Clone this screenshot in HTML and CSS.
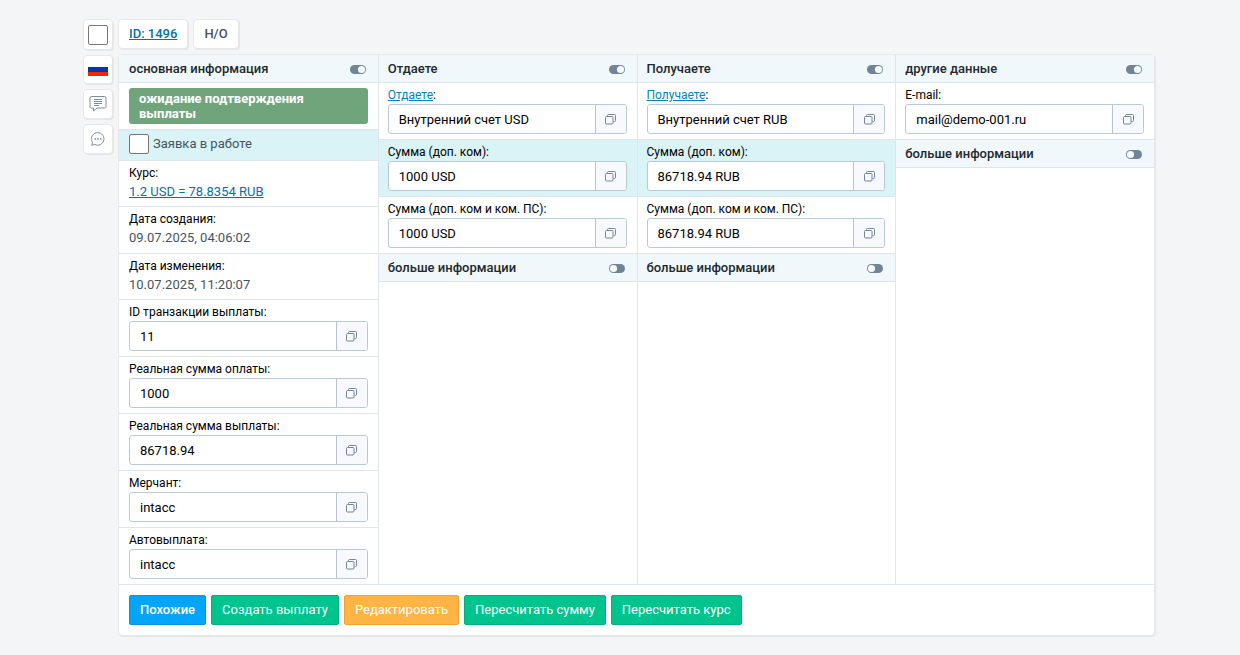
FILE: index.html
```html
<!DOCTYPE html>
<html lang="ru">
<head>
<meta charset="utf-8">
<title>Заявка 1496</title>
<link rel="stylesheet" href="styles.css">
</head>
<body>
<svg class="sprite" aria-hidden="true">
  <symbol id="copy" viewBox="0 0 11 11"><path d="M2.5 2.500V1.500a1 1 0 0 1 1-1h6a1 1 0 0 1 1 1v5a1 1 0 0 1-1 1h-1M1.500 2.500h5.500a1 1 0 0 1 1 1v5.500a1 1 0 0 1-1 1h-5.500a1 1 0 0 1-1-1v-5.500a1 1 0 0 1 1-1z" fill="none" stroke="#728599"/></symbol>
  <symbol id="on" viewBox="0 0 16 9"><rect width="16" height="9" rx="4.500" fill="#718496"/><circle cx="11.500" cy="4.500" r="3.600" fill="#f5fafc"/></symbol>
  <symbol id="off" viewBox="0 0 16 9"><rect width="16" height="9" rx="4.500" fill="#718496"/><circle cx="4.500" cy="4.500" r="3.600" fill="#f5fafc"/></symbol>
</svg>
<main class="order">
  <aside class="side">
    <label class="tile select"><input type="checkbox" class="check" aria-label="Выбрать заявку"></label>
    <button class="tile lang" aria-label="Язык: русский"><span class="flag"></span></button>
    <button class="tile" aria-label="Комментарий"><svg width="18" height="16" viewBox="0 0 18 16" fill="none" stroke="#7a8da0"><path d="M2.500.5h13a1.500 1.500 0 0 1 1.500 1.500v8.500a1.500 1.500 0 0 1-1.500 1.500H8l-3.500 3v-3h-2A1.500 1.500 0 0 1 1 10.500V2A1.500 1.500 0 0 1 2.500.5zM5 3.500h8M5 5.500h8M5 7.500h8M5 9.500h5"/></svg></button>
    <button class="tile" aria-label="Сообщения"><svg width="14" height="14" viewBox="0 0 14 14" fill="none" stroke="#7a8da0"><path d="M1.500 10.500A6.300 6.300 0 1 1 3.800 12.500L.8 13.300z"/><path d="M3.500 7h1.500M6.200 7h1.500M9 7h1.500" stroke-width="1.500"/></svg></button>
  </aside>
  <section class="content">
    <header class="tabs"><div class="tab"><a href="#">ID: 1496</a></div><div class="tab">Н/О</div></header>
    <div class="panel">
      <div class="columns">
        <section class="column">
          <h2 class="head">основная информация<button class="toggle" aria-label="Свернуть"><svg width="16" height="9"><use href="#on"/></svg></button></h2>
          <div class="row state"><div class="status">ожидание подтверждения выплаты</div></div>
          <label class="row accent work"><input type="checkbox" class="check">Заявка в работе</label>
          <div class="row"><div class="label">Курс:</div><div class="value"><a href="#">1.2 USD = 78.8354 RUB</a></div></div>
          <div class="row"><div class="label">Дата создания:</div><div class="value created">09.07.2025, 04:06:02</div></div>
          <div class="row"><div class="label">Дата изменения:</div><div class="value">10.07.2025, 11:20:07</div></div>
          <div class="row"><label class="label" for="tx">ID транзакции выплаты:</label><div class="field"><input id="tx" value="11"><button class="copy" aria-label="Копировать"><svg width="11" height="11"><use href="#copy"/></svg></button></div></div>
          <div class="row"><label class="label" for="paid">Реальная сумма оплаты:</label><div class="field"><input id="paid" value="1000"><button class="copy" aria-label="Копировать"><svg width="11" height="11"><use href="#copy"/></svg></button></div></div>
          <div class="row"><label class="label" for="payout">Реальная сумма выплаты:</label><div class="field"><input id="payout" value="86718.94"><button class="copy" aria-label="Копировать"><svg width="11" height="11"><use href="#copy"/></svg></button></div></div>
          <div class="row"><label class="label" for="merchant">Мерчант:</label><div class="field"><input id="merchant" value="intacc"><button class="copy" aria-label="Копировать"><svg width="11" height="11"><use href="#copy"/></svg></button></div></div>
          <div class="row"><label class="label" for="auto">Автовыплата:</label><div class="field"><input id="auto" value="intacc"><button class="copy" aria-label="Копировать"><svg width="11" height="11"><use href="#copy"/></svg></button></div></div>
        </section>
        <section class="column">
          <h2 class="head">Отдаете<button class="toggle" aria-label="Свернуть"><svg width="16" height="9"><use href="#on"/></svg></button></h2>
          <div class="row"><div class="label"><a href="#">Отдаете</a>:</div><div class="field"><input aria-label="Отдаете" value="Внутренний счет USD"><button class="copy" aria-label="Копировать"><svg width="11" height="11"><use href="#copy"/></svg></button></div></div>
          <div class="row accent"><label class="label" for="give1">Сумма (доп. ком):</label><div class="field"><input id="give1" value="1000 USD"><button class="copy" aria-label="Копировать"><svg width="11" height="11"><use href="#copy"/></svg></button></div></div>
          <div class="row"><label class="label" for="give2">Сумма (доп. ком и ком. ПС):</label><div class="field"><input id="give2" value="1000 USD"><button class="copy" aria-label="Копировать"><svg width="11" height="11"><use href="#copy"/></svg></button></div></div>
          <h2 class="head">больше информации<button class="toggle" aria-label="Развернуть"><svg width="16" height="9"><use href="#off"/></svg></button></h2>
        </section>
        <section class="column">
          <h2 class="head">Получаете<button class="toggle" aria-label="Свернуть"><svg width="16" height="9"><use href="#on"/></svg></button></h2>
          <div class="row"><div class="label"><a href="#">Получаете</a>:</div><div class="field"><input aria-label="Получаете" value="Внутренний счет RUB"><button class="copy" aria-label="Копировать"><svg width="11" height="11"><use href="#copy"/></svg></button></div></div>
          <div class="row accent"><label class="label" for="get1">Сумма (доп. ком):</label><div class="field"><input id="get1" value="86718.94 RUB"><button class="copy" aria-label="Копировать"><svg width="11" height="11"><use href="#copy"/></svg></button></div></div>
          <div class="row"><label class="label" for="get2">Сумма (доп. ком и ком. ПС):</label><div class="field"><input id="get2" value="86718.94 RUB"><button class="copy" aria-label="Копировать"><svg width="11" height="11"><use href="#copy"/></svg></button></div></div>
          <h2 class="head">больше информации<button class="toggle" aria-label="Развернуть"><svg width="16" height="9"><use href="#off"/></svg></button></h2>
        </section>
        <section class="column">
          <h2 class="head">другие данные<button class="toggle" aria-label="Свернуть"><svg width="16" height="9"><use href="#on"/></svg></button></h2>
          <div class="row"><label class="label" for="mail">E-mail:</label><div class="field"><input id="mail" value="mail@demo-001.ru"><button class="copy" aria-label="Копировать"><svg width="11" height="11"><use href="#copy"/></svg></button></div></div>
          <h2 class="head">больше информации<button class="toggle" aria-label="Развернуть"><svg width="16" height="9"><use href="#off"/></svg></button></h2>
        </section>
      </div>
      <footer class="actions">
        <button class="btn blue">Похожие</button>
        <button class="btn green">Создать выплату</button>
        <button class="btn orange">Редактировать</button>
        <button class="btn green">Пересчитать сумму</button>
        <button class="btn green">Пересчитать курс</button>
      </footer>
    </div>
  </section>
</main>
</body>
</html>
```
FILE: styles.css
```css
* { box-sizing: border-box; }
body {
  margin: 0;
  background: #f4f5f7;
  color: #46535f;
  font: 400 13px/19px Roboto, sans-serif;
}
button, input { font: inherit; margin: 0; }
button { cursor: pointer; }
svg { display: block; }
a { color: #0073aa; }
.sprite { position: absolute; width: 0; height: 0; }

.order {
  display: grid;
  grid-template-columns: 30px minmax(0, 1fr);
  gap: 5px;
  padding: 19px 85px 19px 83px;
}
.side { display: flex; flex-direction: column; gap: 5px; }
.tile, .tab, .panel {
  background: #fff;
  border: 1px solid #e8e8e9;
  border-radius: 4px;
  box-shadow: 1px 1px 0 #e6e6e7;
}
.tile {
  display: flex;
  align-items: center;
  justify-content: center;
  height: 30px;
  padding: 0;
}
.select { height: 31px; padding-top: 1px; }
.lang { height: 29px; }
.flag {
  width: 20px;
  height: 13px;
  background: linear-gradient(#fff 0 4px, #0036b0 4px 9px, #f5220f 9px);
}
.check {
  appearance: none;
  flex: none;
  width: 20px;
  height: 20px;
  background: #fff;
  border: 1px solid #767676;
  border-radius: 2px;
}
.check:checked { background: #03a5f9; }

.tabs { display: flex; gap: 5px; margin-bottom: 5px; }
.tab {
  height: 30px;
  padding: 0 10px;
  font-weight: 500;
  line-height: 28px;
}

.columns {
  display: grid;
  grid-template-columns: repeat(4, minmax(0, 1fr));
}
.column + .column { border-left: 1px solid #dee5ec; }
.head {
  display: flex;
  align-items: center;
  justify-content: space-between;
  height: 28px;
  margin: 0;
  padding: 0 10px 0 9px;
  background: #f0f8fb;
  border-bottom: 1px solid #dee5ec;
  color: #23282d;
  font-size: 13px;
  font-weight: 500;
}
.toggle { padding: 1px 2px 0 0; border: 0; background: none; }
.row {
  padding: 4px 10px 5px 9px;
  border-bottom: 1px solid #dee5ec;
}
.column:first-child .row, .column:first-child .head { padding-left: 10px; }
.row:last-child { border-bottom: 0; }
.state { padding-top: 5px; }
.accent { background: #d9f3f7; }
.status {
  padding: 3px 10px;
  border-radius: 3px;
  background: #70a57b;
  color: #fff;
  font-weight: 700;
  line-height: 15px;
}
.work {
  display: flex;
  align-items: flex-start;
  gap: 4px;
  height: 31px;
}
.label {
  display: block;
  margin-bottom: 1px;
  color: #000;
  font-size: 12px;
  line-height: 16px;
}
.label a { color: #0085ba; }
.created { line-height: 20px; }
.field {
  display: flex;
  height: 30px;
  overflow: hidden;
  border: 1px solid #b9c9d8;
  border-radius: 3px;
  background: #fff;
}
.field input {
  flex: 1;
  min-width: 0;
  padding: 0 10px;
  border: 0;
  outline: 0;
  background: none;
  color: #000;
}
.copy {
  display: flex;
  align-items: center;
  justify-content: center;
  width: 31px;
  padding: 0;
  border: 0;
  border-left: 1px solid #b9c3cf;
  background: #f8f9fe;
}

.actions {
  display: flex;
  flex-wrap: wrap;
  gap: 5px;
  padding: 10px;
  border-top: 1px solid #dee5ec;
}
.btn {
  height: 30px;
  padding: 0 10px 2px;
  border: 1px solid;
  border-radius: 2px;
  color: #fff;
}
.blue { background: #03a5f9; border-color: #0595e0; font-weight: 500; }
.green { background: #00c48e; border-color: #00b080; }
.orange { background: #ffb443; border-color: #f3a32d; }
```
